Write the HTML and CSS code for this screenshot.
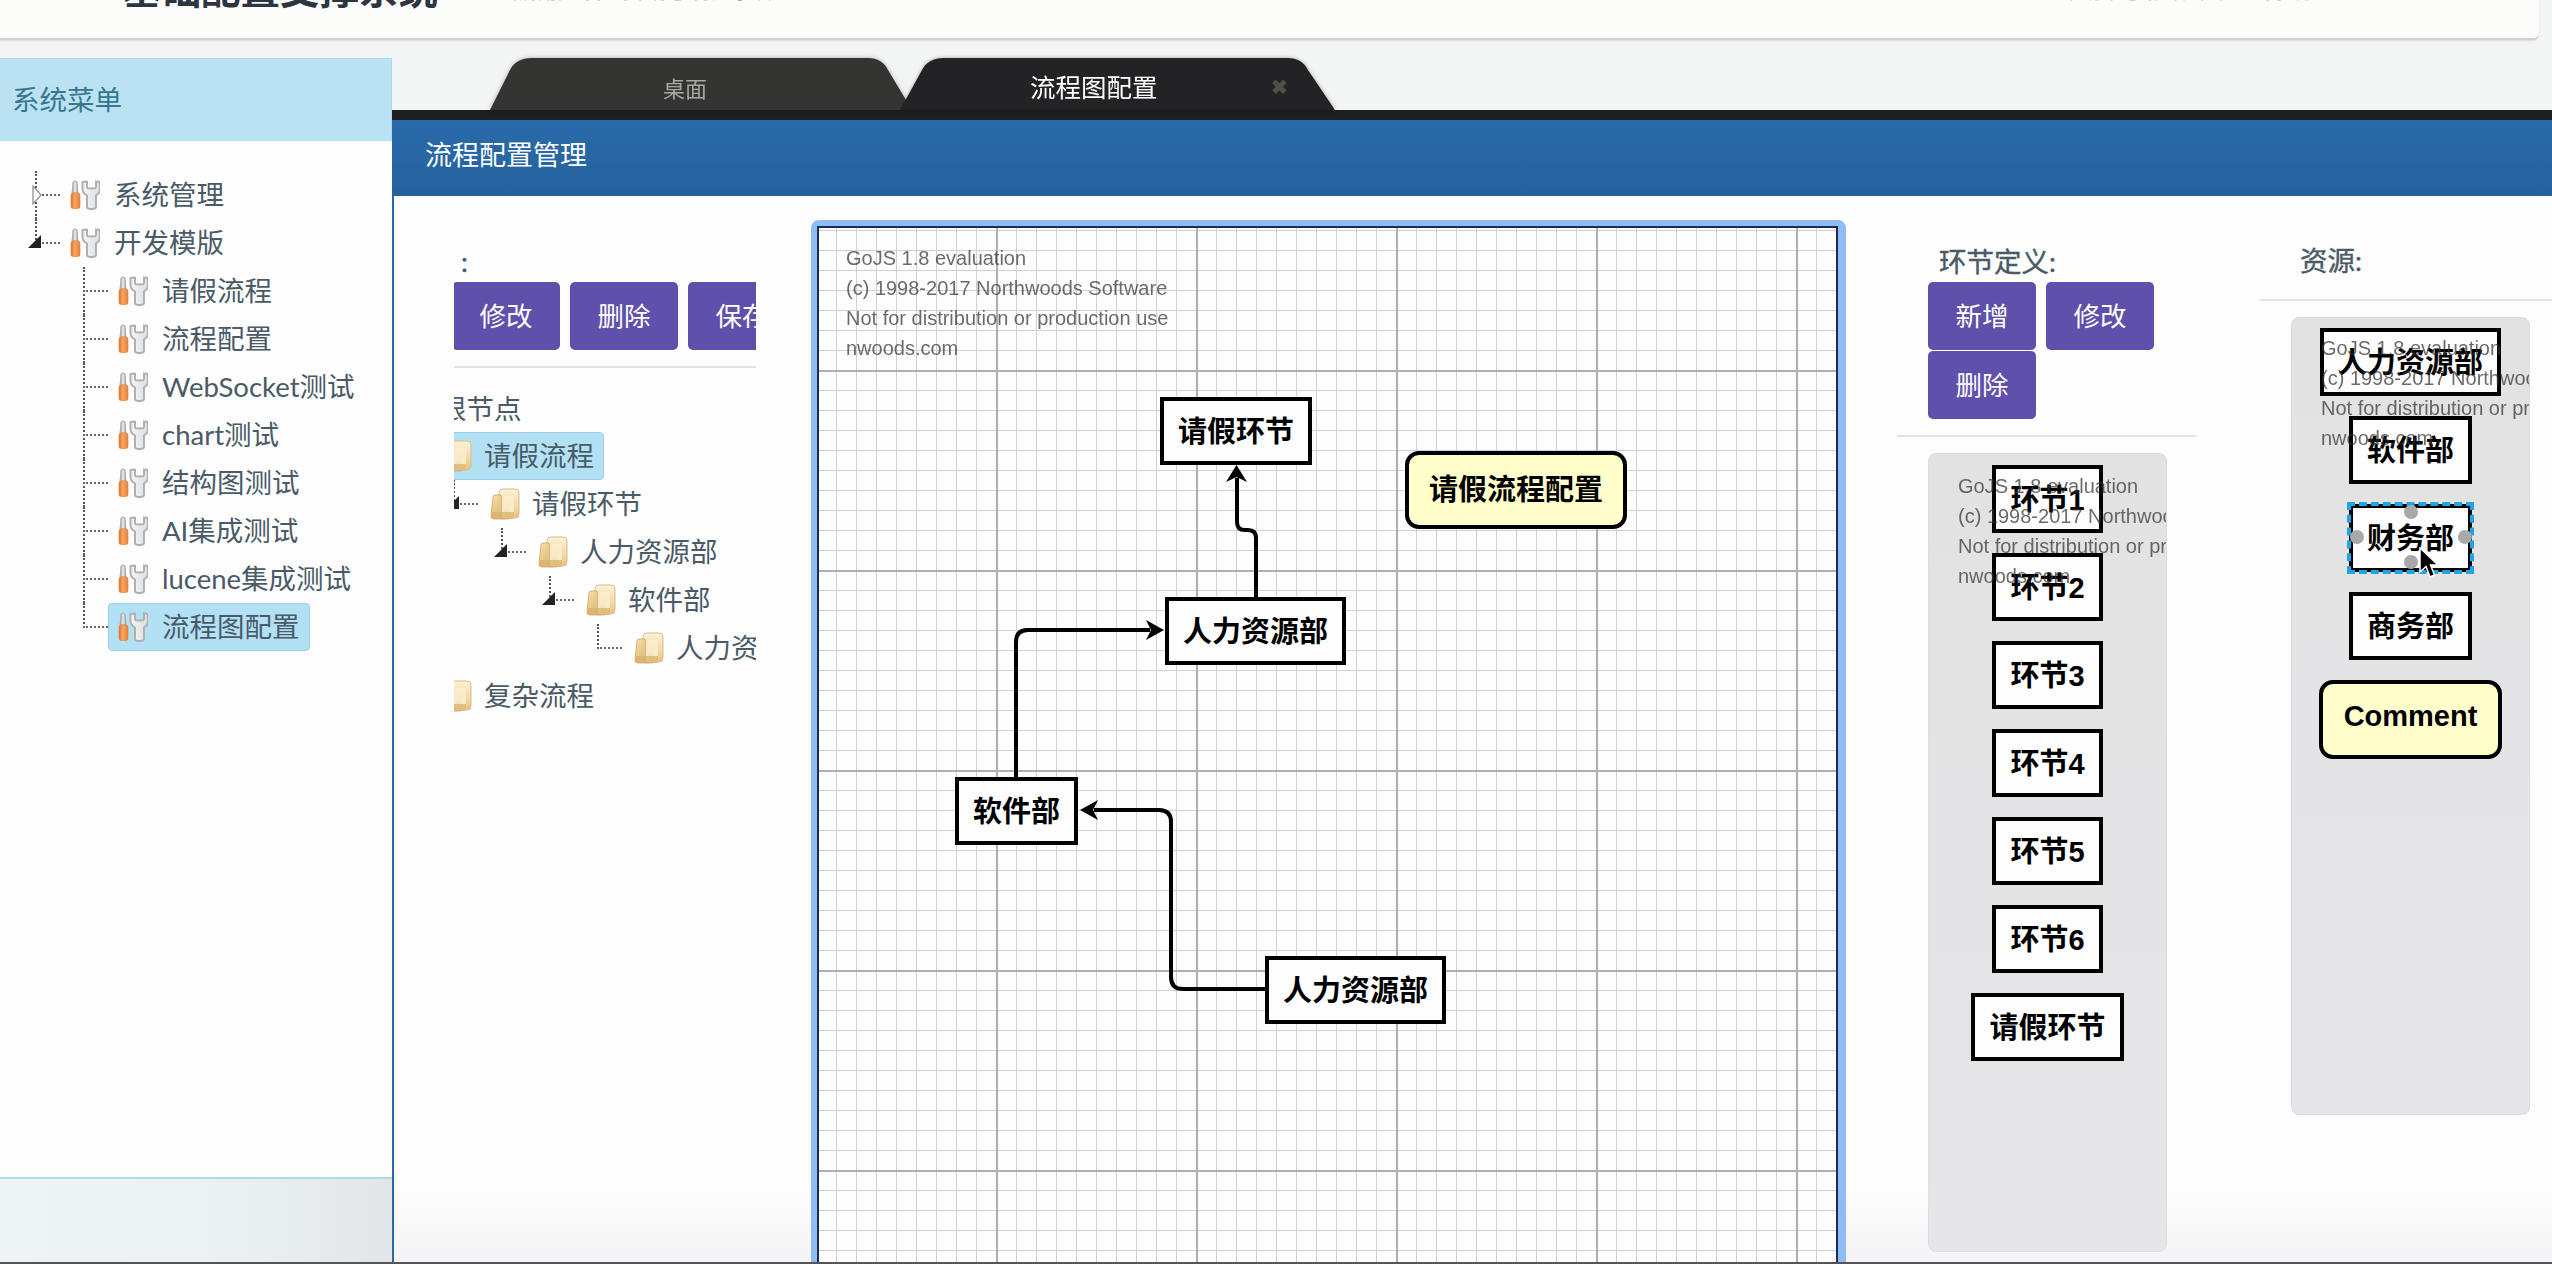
FILE: index.html
```html
<!DOCTYPE html>
<html lang="zh-CN">
<head>
<meta charset="utf-8">
<title>流程配置管理</title>
<link rel="stylesheet" href="styles.css">
</head>
<body>
<svg class="defs" aria-hidden="true">
  <defs>
    <linearGradient id="g-shaft" x1="0" x2="1" y1="0" y2="0"><stop offset="0" stop-color="#9a9a9a"/><stop offset=".5" stop-color="#ececec"/><stop offset="1" stop-color="#a4a4a4"/></linearGradient>
    <linearGradient id="g-handle" x1="0" x2="1" y1="0" y2="0"><stop offset="0" stop-color="#dc7430"/><stop offset=".45" stop-color="#f9a867"/><stop offset="1" stop-color="#e57f36"/></linearGradient>
    <linearGradient id="g-wrench" x1="0" x2="1" y1="0" y2="0"><stop offset="0" stop-color="#f6f6f6"/><stop offset="1" stop-color="#dcdcdc"/></linearGradient>
    <linearGradient id="g-folder" x1="0" x2="0" y1="0" y2="1"><stop offset="0" stop-color="#fdf3d6"/><stop offset="1" stop-color="#e6c483"/></linearGradient>
    <linearGradient id="g-folder2" x1="0" x2="1" y1="0" y2="1"><stop offset="0" stop-color="#f6e0ad"/><stop offset="1" stop-color="#d3a860"/></linearGradient>
    <symbol id="i-tools" viewBox="0 0 30 30">
      <path d="M2.500 9 L3 2 Q5 0 7 2 L7.500 9 L8 13 L2 13 Z" fill="url(#g-shaft)" stroke="#a8a8a8" stroke-width="1"/>
      <rect x="1" y="13" width="9" height="15.500" rx="2" fill="url(#g-handle)" stroke="#e0813a" stroke-width=".6"/>
      <path d="M12.500 2 L12.500 9 Q12.500 13 17 15.500 L17 27 Q17 29 21.500 29 Q26 29 26 27 L26 15.500 Q30 13 30 9 L30 2 L26 1.500 L26 7 Q26 8.500 21.500 8.500 Q17 8.500 17 7 L17 1.500 Z" fill="url(#g-wrench)" stroke="#b0b0b0" stroke-width="2"/>
    </symbol>
    <symbol id="i-folder" viewBox="0 0 30 32">
      <rect x="9" y="1" width="20" height="29" rx="4" fill="url(#g-folder)" stroke="#d8bd85" stroke-width="1"/>
      <path d="M3 9 Q3 7 5 7 L10 7 Q12 7 12 9 L12 22 L19 22 L19 31 L4 31 Q1 31 1 28 Z" fill="url(#g-folder2)" stroke="#c9a763" stroke-width=".8"/>
      <path d="M12 8 H22 Q24 8 24 10 V30 H12 Z" fill="#fbeccb" opacity=".85"/>
      <path d="M1 24 H24 V29 Q24 31 22 31 H4 Q1 31 1 28 Z" fill="#d9b26b" opacity=".75"/>
    </symbol>
  </defs>
</svg>

<div class="page">
  <header class="topbar">
    <div class="brand">基础配置支撑系统</div>
    <div class="topnav">当前用户 管理员 消息 待办事项</div>
    <div class="topnav topnav-right">帮助中心 修改密码 退出系统</div>
  </header>

  <div class="shell">
    <aside class="sidebar">
      <div class="side-head">系统菜单</div>
      <div class="side-body">
        <div class="row l0"><span class="twig v-full"><svg class="tri-closed" viewBox="0 0 10 20"><path d="M1 1 L9 10 L1 19 Z" fill="#fff" stroke="#999" stroke-width="1.400"/></svg></span><span class="label"><svg class="ico"><use href="#i-tools"/></svg>系统管理</span></div>
        <div class="row l0"><span class="twig v-half"><i class="tri"></i></span><span class="label"><svg class="ico"><use href="#i-tools"/></svg>开发模版</span></div>
        <div class="row l1"><span class="twig v-full"></span><span class="label"><svg class="ico"><use href="#i-tools"/></svg>请假流程</span></div>
        <div class="row l1"><span class="twig v-full"></span><span class="label"><svg class="ico"><use href="#i-tools"/></svg>流程配置</span></div>
        <div class="row l1"><span class="twig v-full"></span><span class="label"><svg class="ico"><use href="#i-tools"/></svg>WebSocket测试</span></div>
        <div class="row l1"><span class="twig v-full"></span><span class="label"><svg class="ico"><use href="#i-tools"/></svg>chart测试</span></div>
        <div class="row l1"><span class="twig v-full"></span><span class="label"><svg class="ico"><use href="#i-tools"/></svg>结构图测试</span></div>
        <div class="row l1"><span class="twig v-full"></span><span class="label"><svg class="ico"><use href="#i-tools"/></svg>AI集成测试</span></div>
        <div class="row l1"><span class="twig v-full"></span><span class="label"><svg class="ico"><use href="#i-tools"/></svg>lucene集成测试</span></div>
        <div class="row l1"><span class="twig v-half"></span><span class="label selected"><svg class="ico"><use href="#i-tools"/></svg>流程图配置</span></div>
      </div>
      <div class="side-foot"></div>
    </aside>

    <main class="content">
      <nav class="tabs">
        <div class="tab tab-a">桌面</div>
        <div class="tab tab-b"><span>流程图配置</span><b class="close">✖</b></div>
      </nav>
      <div class="tab-rule"></div>
      <div class="title-bar">流程配置管理</div>

      <div class="work">
        <section class="col-tree">
          <div class="scroller">
            <h3 class="col-title tree-title">流程定义&nbsp;&nbsp;:</h3>
            <div class="toolbar">
              <button class="btn">新增</button>
              <button class="btn">修改</button>
              <button class="btn">删除</button>
              <button class="btn">保存</button>
            </div>
            <hr class="rule">
            <div class="tree">
              <div class="tree-root">根节点</div>
              <div class="row t0"><span class="twig"></span><span class="label selected"><svg class="ico folder"><use href="#i-folder"/></svg>请假流程</span></div>
              <div class="row t1"><span class="twig v-half"><i class="tri"></i></span><span class="label"><svg class="ico folder"><use href="#i-folder"/></svg>请假环节</span></div>
              <div class="row t2"><span class="twig v-half"><i class="tri"></i></span><span class="label"><svg class="ico folder"><use href="#i-folder"/></svg>人力资源部</span></div>
              <div class="row t3"><span class="twig v-half"><i class="tri"></i></span><span class="label"><svg class="ico folder"><use href="#i-folder"/></svg>软件部</span></div>
              <div class="row t4"><span class="twig v-half"></span><span class="label"><svg class="ico folder"><use href="#i-folder"/></svg>人力资源部</span></div>
              <div class="row t0"><span class="twig"></span><span class="label"><svg class="ico folder"><use href="#i-folder"/></svg>复杂流程</span></div>
            </div>
          </div>
        </section>

        <section class="canvas-ring">
          <div class="canvas">
            <div class="mark mark-main">GoJS 1.8 evaluation<br>(c) 1998-2017 Northwoods Software<br>Not for distribution or production use<br>nwoods.com</div>
            <svg class="links" viewBox="819 228 1017 1036">
              <path class="wire" d="M1016 777 V642 Q1016 630 1028 630 H1150"/>
              <path class="head" d="M1164 630 L1146 620 L1151 630 L1146 640 Z"/>
              <path class="wire" d="M1265 989 H1183 Q1171 989 1171 977 V822 Q1171 810 1159 810 H1094"/>
              <path class="head" d="M1080 810 L1098 800 L1093 810 L1098 820 Z"/>
              <path class="wire" d="M1256 597 V538 Q1256 530 1248 530 H1245 Q1237 530 1237 522 V478"/>
              <path class="head" d="M1236.500 465 L1226 482 L1236.500 477 L1247 482 Z"/>
            </svg>
            <div class="node at-leave">请假环节</div>
            <div class="node note at-note">请假流程配置</div>
            <div class="node at-hr1">人力资源部</div>
            <div class="node at-soft">软件部</div>
            <div class="node at-hr2">人力资源部</div>
          </div>
        </section>

        <section class="col-steps">
          <h3 class="col-title steps-title">环节定义:</h3>
          <div class="toolbar steps-tools">
            <button class="btn">新增</button>
            <button class="btn">修改</button>
            <button class="btn">删除</button>
          </div>
          <hr class="rule steps-rule">
          <div class="palette steps-palette">
            <div class="node">环节1</div>
            <div class="node">环节2</div>
            <div class="node">环节3</div>
            <div class="node">环节4</div>
            <div class="node">环节5</div>
            <div class="node">环节6</div>
            <div class="node">请假环节</div>
            <div class="mark">GoJS 1.8 evaluation<br>(c) 1998-2017 Northwoods Software<br>Not for distribution or production use<br>nwoods.com</div>
          </div>
        </section>

        <section class="col-res">
          <h3 class="col-title res-title">资源:</h3>
          <hr class="rule res-rule">
          <div class="palette res-palette">
            <div class="node">人力资源部</div>
            <div class="node">软件部</div>
            <div class="node picked">财务部
              <i class="port port-t"></i><i class="port port-l"></i><i class="port port-r"></i><i class="port port-b"></i>
              <svg class="cursor" viewBox="0 0 20 32"><path d="M1 1 V25 L7 19.500 L11 30 L15.500 28 L11.500 18 H19 Z" fill="#000" stroke="#fff" stroke-width="1.500"/></svg>
            </div>
            <div class="node">商务部</div>
            <div class="node note res-note">Comment</div>
            <div class="mark">GoJS 1.8 evaluation<br>(c) 1998-2017 Northwoods Software<br>Not for distribution or production use<br>nwoods.com</div>
          </div>
        </section>
      </div>
    </main>
  </div>
  <div class="screen-edge"></div>
</div>
</body>
</html>
```

FILE: styles.css
```css
* { box-sizing: border-box; }
html, body { margin: 0; height: 100%; }
body {
  background: #f3f5f5;
  color: #4a5a66;
  font-family: Lato, "Noto Sans CJK SC", sans-serif;
  font-size: 27.5px;
  overflow: hidden;
}
.defs { position: absolute; width: 0; height: 0; }
.page { display: flex; flex-direction: column; height: 1264px; overflow: hidden; }

/* top bar: the capture cuts it off at the top of the frame */
.topbar {
  flex: none;
  display: flex;
  height: 40px;
  margin-right: 13px;
  overflow: hidden;
  background: #fcfcfb;
  border-bottom: 2px solid #d2d2d2;
  border-bottom-right-radius: 6px;
  box-shadow: 0 1px 2px rgba(0, 0, 0, .1);
}
.brand {
  margin: -33px 0 0 122px;
  font-family: "Noto Sans CJK SC", sans-serif;
  font-size: 39.500px;
  line-height: 40px;
  font-weight: 700;
  color: #2d3540;
  height: 40px;
  white-space: nowrap;
}
.topnav {
  margin: -20px 0 0 60px;
  height: 22px;
  font-family: "Noto Sans CJK SC", sans-serif;
  font-size: 20px;
  line-height: 22px;
  color: #aaa;
  white-space: nowrap;
}
.topnav-right { margin-left: 1290px; }

.shell { flex: 1; min-height: 0; display: flex; }

/* sidebar */
.sidebar { flex: none; width: 392px; margin-top: 18px; display: flex; flex-direction: column; }
.side-head {
  flex: none;
  height: 83px;
  padding: 0 0 4px 12px;
  display: flex;
  align-items: center;
  background: #bbe2f3;
  border-top: 1px solid #a5dcee;
  border-right: 1px solid #a5dcee;
  color: #38768f;
  font-size: 27.5px;
}
.side-body { flex: 1; padding-top: 30px; background: #fdfdfd; }
.side-foot {
  flex: none;
  height: 85px;
  background: linear-gradient(90deg, #eef4f6 0, #ecf2f4 50%, #e2e6e8 100%);
  border-top: 2px solid #a6dcec;
}

/* tree rows */
.row { display: flex; align-items: stretch; height: 48px; white-space: nowrap; }
.row.l0 { padding-left: 35px; }
.row.l1 { padding-left: 83px; }
.twig { position: relative; flex: none; width: 25px; }
.twig::after {
  content: "";
  position: absolute;
  left: 0;
  right: 0;
  top: 23px;
  border-top: 2px dotted #666;
}
.twig.v-full::before, .twig.v-half::before {
  content: "";
  position: absolute;
  left: 0;
  top: 0;
  border-left: 2px dotted #555;
}
.twig.v-full::before { height: 48px; }
.twig.v-half::before { height: 25px; }
.tri {
  position: absolute;
  left: -7px;
  top: 16px;
  width: 13px;
  height: 13px;
  background: #222;
  clip-path: polygon(100% 0, 100% 100%, 0 100%);
  z-index: 1;
}
.tri-closed { position: absolute; left: -3px; top: 14px; width: 10px; height: 20px; z-index: 1; }
.label {
  display: flex;
  align-items: center;
  padding: 0 9px 0 9px;
  border: 1px solid transparent;
  border-radius: 4px;
  line-height: 48px;
}
.label.selected { background: #b2e1f6; border-color: #a1cfe2; }
.ico { flex: none; width: 30px; height: 30px; margin-right: 14px; }
.ico.folder { height: 32px; margin-right: 12px; }

/* main */
.content { flex: 1; min-width: 0; display: flex; flex-direction: column; margin-top: 18px; }
.tabs {
  flex: none;
  height: 52px;
  display: flex;
  padding-left: 98px;
  filter: drop-shadow(0 0 2px rgba(0, 0, 0, .3));
}
.tab { height: 52px; display: flex; align-items: center; }
.tab-a {
  width: 422px;
  padding: 5px 0 0 173px;
  font-size: 22px;
  font-family: "Noto Sans CJK SC", sans-serif;
  color: #a8a8a8;
  background: #343432;
  clip-path: path("M0 52 L20 12 Q26 0 42 0 H378 Q392 0 398 12 L422 52 Z");
}
.tab-b {
  position: relative;
  width: 435px;
  margin-left: -12px;
  padding: 2px 0 0 130px;
  font-size: 25.500px;
  font-family: "Noto Sans CJK SC", sans-serif;
  color: #fff;
  background: #232325;
  clip-path: path("M0 52 L22 12 Q28 0 44 0 H388 Q402 0 408 12 L435 52 Z");
}
.close { margin-left: 113px; font-size: 20px; color: #50504a; font-weight: 700; }
.tab-rule { flex: none; height: 10px; background: #1f1f23; }
.title-bar {
  flex: none;
  height: 76px;
  padding: 0 0 9px 33px;
  display: flex;
  align-items: center;
  background: linear-gradient(#2a6bab, #25619c);
  color: #fff;
  font-size: 27px;
}

.work {
  flex: 1;
  min-height: 0;
  display: flex;
  overflow: hidden;
  background: linear-gradient(#fdfdfd 0, #fdfdfd 93%, #f4f4f6 100%);
  border-left: 2px solid #2a69a8;
}

.col-title {
  margin: 0;
  font-size: 27.5px;
  font-weight: 400;
  -webkit-text-stroke: .4px currentColor;
  line-height: 40px;
  height: 40px;
  color: #4a5a66;
  white-space: nowrap;
}
.btn {
  flex: none;
  width: 108px;
  height: 68px;
  padding: 0 0 4px;
  border: 0;
  border-radius: 5px;
  background: #5f50ab;
  color: #fff;
  font: 400 26.500px "Noto Sans CJK SC", sans-serif;
}
.rule { margin: 0; border: 0; border-top: 2px solid #e2e4e4; }

/* tree column: content is scrolled sideways inside its frame */
.col-tree { flex: none; width: 302px; margin-left: 60px; overflow: hidden; padding-top: 46px; }
.scroller { width: 560px; margin-left: -120px; }
.tree-title { padding-left: 3px; }
.toolbar { display: flex; flex-wrap: wrap; column-gap: 10px; row-gap: 1px; }
.scroller .rule { margin: 16px 0 16px; }
.tree-root { height: 48px; line-height: 50px; padding-left: 105px; color: #4a5a66; }
.row.t0 { padding-left: 71px; }
.row.t0 .twig { width: 25px; visibility: hidden; }
.row.t1 { padding-left: 119px; }
.row.t2 { padding-left: 167px; }
.row.t3 { padding-left: 215px; }
.row.t4 { padding-left: 263px; }
.tree .label { padding-left: 11px; }

/* canvas */
.canvas-ring {
  flex: none;
  width: 1035px;
  height: 1060px;
  margin: 24px 0 0 55px;
  border: 8px solid #8fbcf5;
  border-left-width: 6px;
  border-top-width: 6px;
  border-radius: 8px 8px 0 0;
}
.canvas {
  position: relative;
  height: 100%;
  border: 2px solid #1c2c55;
  background-color: #fdfdfd;
  background-image:
    linear-gradient(90deg, #aeaeb6 2px, transparent 2px),
    linear-gradient(#aeaeb6 2px, transparent 2px),
    linear-gradient(90deg, #d0d0d8 1px, transparent 1px),
    linear-gradient(#d0d0d8 1px, transparent 1px);
  background-size: 200px 200px, 200px 200px, 20px 20px, 20px 20px;
  background-position: 177px 0, 0 142px, 17px 0, 0 2px;
  overflow: hidden;
}
.links { position: absolute; left: 0; top: 0; width: 1017px; height: 1036px; }
.wire { fill: none; stroke: #000; stroke-width: 4; }
.head { fill: #000; }

.mark {
  position: absolute;
  font: 20px/30px "Liberation Sans", Arial, sans-serif;
  color: rgba(50, 50, 50, .72);
  white-space: nowrap;
  filter: blur(.6px);
  pointer-events: none;
}
.mark-main { left: 27px; top: 15px; }

.node {
  display: flex;
  align-items: center;
  justify-content: center;
  height: 68px;
  padding: 0 14px 4px;
  background: #fdfdfd;
  border: 4px solid #000;
  color: #000;
  font: 700 29px "Liberation Sans", "Noto Sans CJK SC", sans-serif;
  white-space: nowrap;
}
.note { background: #ffffcc; border-radius: 14px; padding: 0 20px 6px; }
.canvas .node { position: absolute; }
.at-leave { left: 341px; top: 169px; }
.at-note { left: 586px; top: 223px; height: 78px; }
.at-hr1 { left: 346px; top: 369px; }
.at-soft { left: 136px; top: 549px; }
.at-hr2 { left: 446px; top: 728px; }

/* right-hand columns */
.col-steps { flex: none; width: 299px; margin-left: 51px; padding-top: 46px; }
.steps-title { padding-left: 42px; }
.steps-tools { width: 240px; margin-left: 31px; }
.steps-rule { margin-top: 16px; }
.palette {
  position: relative;
  display: flex;
  flex-direction: column;
  align-items: center;
  row-gap: 20px;
  width: 239px;
  overflow: hidden;
  background: linear-gradient(#e2e2e2, #e6e6ea);
  border: 1px solid #dcdcdf;
  border-radius: 8px;
}
.steps-palette { height: 799px; margin: 16px 0 0 31px; padding-top: 11px; }
.steps-palette .mark { left: 29px; top: 17px; }
.col-res { flex: 1; min-width: 0; margin-left: 64px; padding-top: 45px; }
.res-title { padding-left: 40px; }
.res-rule { margin-top: 18px; }
.res-palette { height: 798px; margin: 16px 0 0 31px; padding-top: 10px; }
.res-palette .mark { left: 29px; top: 15px; }
.res-note { width: 183px; height: 79px; }

.picked { position: relative; outline: 4px dashed #1ea5e6; outline-offset: -2px; }
.port { position: absolute; width: 14px; height: 14px; border-radius: 50%; background: #a9a9a9; }
.port-t { left: 51px; top: -3px; }
.port-l { left: -3px; top: 22px; }
.port-r { left: 105px; top: 22px; }
.port-b { left: 51px; top: 47px; }
.cursor { position: absolute; left: 66px; top: 39px; width: 20px; height: 32px; }

.screen-edge { flex: none; height: 2px; background: #555; position: relative; }
```
